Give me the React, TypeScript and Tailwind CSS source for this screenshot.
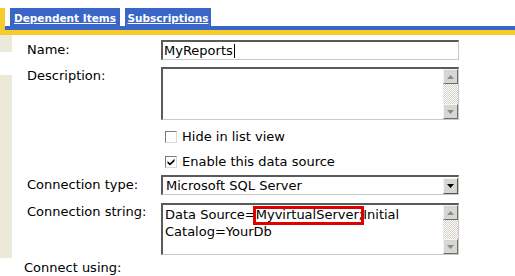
import React from "react";

const field =
  "border-t-2 border-l-2 border-r border-b border-t-[#5a5a5a] border-l-[#5a5a5a] border-r-[#c8c8c8] border-b-[#c8c8c8] bg-white";

function ScrollBtn({ dir }: { dir: "up" | "down" }) {
  return (
    <div className="flex h-[15px] w-[15px] items-center justify-center border border-t-[#f4f4f4] border-l-[#f4f4f4] border-r-[#6e6e6e] border-b-[#6e6e6e] bg-[#d6d6d2]">
      <svg width="7" height="4" viewBox="0 0 7 4">
        {dir === "up" ? (
          <path d="M0 4 L3.5 0 L7 4 Z" fill="#8a8a8a" />
        ) : (
          <path d="M0 0 L3.5 4 L7 0 Z" fill="#8a8a8a" />
        )}
      </svg>
    </div>
  );
}

function Scrollbar() {
  return (
    <div className="flex w-[15px] flex-col">
      <ScrollBtn dir="up" />
      <div className="flex-1 bg-[repeating-conic-gradient(#ffffff_0%_25%,#d4d0c8_0%_50%)] bg-[length:2px_2px]" />
      <ScrollBtn dir="down" />
    </div>
  );
}

function Check({ checked, label }: { checked?: boolean; label: string }) {
  return (
    <div className="flex h-[25px] items-center pl-[4px]">
      <div className="flex h-[12px] w-[12px] items-center justify-center border border-t-[#7a7a7a] border-l-[#7a7a7a] border-r-[#d8d8d8] border-b-[#d8d8d8] bg-white">
        {checked && (
          <svg width="8" height="8" viewBox="0 0 8 8">
            <path d="M0.5 3 L3 5.2 L7.5 0.8 L7.5 3.2 L3 7.5 L0.5 5.2 Z" fill="#000" />
          </svg>
        )}
      </div>
      <span className="ml-[5px]">{label}</span>
    </div>
  );
}

export default function App() {
  return (
    <div className="h-[276px] w-[515px] overflow-hidden bg-white font-['DejaVu_Sans',Verdana,sans-serif] text-[13px] leading-[16px] text-black">
      {/* tab strip */}
      <div className="flex h-[30px]">
        <div className="mt-[8px] w-[5px] bg-[#f7cb2c]" />
        <div className="flex flex-1 flex-col">
          <div className="flex h-[26px] items-end gap-[5px] pl-[5px]">
            <div className="flex h-[18px] w-[110px] items-center justify-center bg-[#3a66c8] pt-[2px] text-[10.5px] font-bold text-white underline">
              Dependent Items
            </div>
            <div className="flex h-[18px] w-[86px] items-center justify-center bg-[#3a66c8] pt-[2px] text-[10.5px] font-bold text-white underline">
              Subscriptions
            </div>
          </div>
          <div className="h-[4px] bg-[#3a66c8]" />
        </div>
      </div>
      <div className="h-[5px] bg-[#f7cb2c]" />

      <div className="flex">
        {/* left strip */}
        <div className="flex w-[12px] flex-col">
          <div className="h-[17px] bg-[#ece9d8]" />
          <div className="h-[23px]" />
          <div className="h-[183px] bg-[#ece9d8]" />
        </div>

        <div className="flex-1 pl-[15px] pt-[5px]">
          <div className="grid grid-cols-[134px_298px]">
            <div className="flex h-[20px] items-center">Name:</div>
            <div className={`${field} flex h-[20px] items-center pl-[1px]`}>
              MyReports<span className="ml-[1px] h-[14px] w-px bg-black" />
            </div>

            <div className="mt-[7px] pt-[1px]">Description:</div>
            <div className={`${field} mt-[7px] flex h-[53px] justify-end`}>
              <Scrollbar />
            </div>

            <div />
            <div className="pt-[4px]">
              <Check label="Hide in list view" />
              <Check checked label="Enable this data source" />
            </div>

            <div className="mt-[1px] flex h-[20px] items-center">Connection type:</div>
            <div className={`${field} mt-[1px] flex h-[20px] items-center justify-between pl-[3px]`}>
              <span>Microsoft SQL Server</span>
              <div className="flex h-[16px] w-[15px] items-center justify-center border border-t-[#f4f4f4] border-l-[#f4f4f4] border-r-[#555] border-b-[#555] bg-[#d6d6d2]">
                <svg width="7" height="4" viewBox="0 0 7 4">
                  <path d="M0 0 L3.5 4 L7 0 Z" fill="#000" />
                </svg>
              </div>
            </div>

            <div className="mt-[8px] pt-[1px]">Connection string:</div>
            <div className={`${field} mt-[8px] flex h-[52px]`}>
              <div className="flex-1 pl-[2px] pt-[1px] leading-[17px]">
                Data Source=
                <span className="relative">
                  MyvirtualServer;
                  <span className="absolute -left-[3px] -right-[1px] -top-[1px] h-[19px] border-[3px] border-[#e00000]" />
                </span>
                Initial
                <br />
                Catalog=YourDb
              </div>
              <Scrollbar />
            </div>
          </div>
          <div className="-ml-[3px] mt-[5px]">Connect using:</div>
        </div>
      </div>
    </div>
  );
}
